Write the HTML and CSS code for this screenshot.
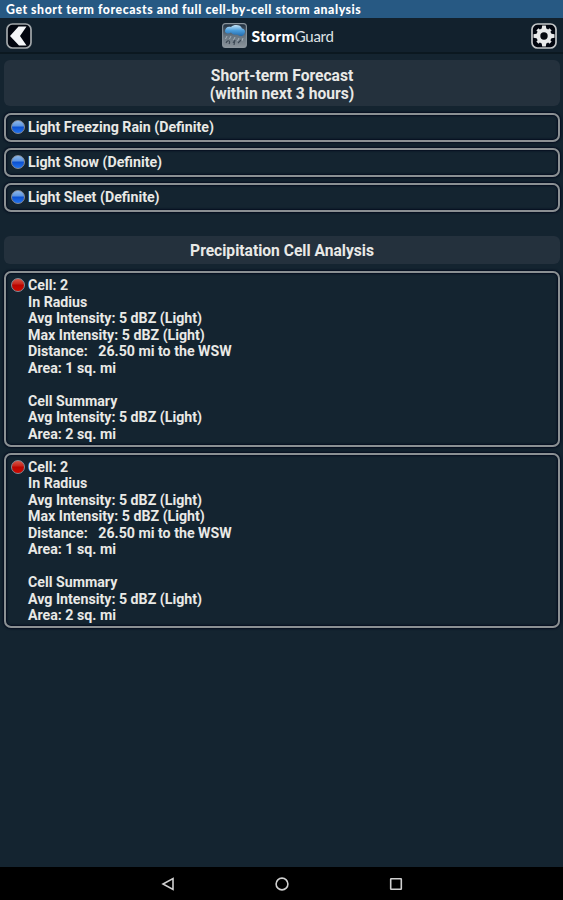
FILE: index.html
```html
<!DOCTYPE html>
<html lang="en">
<head>
    <meta charset="UTF-8">
    <meta name="viewport" content="width=device-width, initial-scale=1.0">
    <title>StormGuard</title>
    <link rel="stylesheet" href="styles.css">
</head>
<body>

    <div class="banner">Get short term forecasts and full cell-by-cell storm analysis</div>

    <header class="toolbar">
        <!-- Back -->
        <svg class="tool" viewBox="0 0 26 26">
            <rect x="1" y="1" width="24" height="24" rx="5.5" fill="#02060f" stroke="#a3a8ab" stroke-width="1.7"/>
            <path d="M12.5 3.5H20.5L14 13L20.5 22.5H13L4 13Z" fill="#f4f6f8"/>
        </svg>
        <div class="brand">
            <svg class="logo" viewBox="0 0 25 25">
                <defs>
                    <linearGradient id="sky" x1="0" y1="0" x2="0" y2="1">
                        <stop offset="0" stop-color="#1c2c3c"/>
                        <stop offset="0.5" stop-color="#65737f"/>
                        <stop offset="1" stop-color="#8b949b"/>
                    </linearGradient>
                    <linearGradient id="cloud" x1="0" y1="0" x2="0" y2="1">
                        <stop offset="0" stop-color="#c4e4f7"/>
                        <stop offset="0.5" stop-color="#4a9ddb"/>
                        <stop offset="1" stop-color="#246aab"/>
                    </linearGradient>
                </defs>
                <rect x="0.6" y="0.6" width="23.8" height="23.8" rx="3" fill="url(#sky)" stroke="#8a959d" stroke-width="1.1"/>
                <path d="M3 8.5C3 4.5 6 3 9 4C12 1 19 1.5 20 5.5C23 6 24 9 22 11.5C20 14 17 13 15 11.5C12 12.5 10 11 9 9.5C7 11 4 11 3 8.5Z" fill="url(#cloud)"/>
                <path d="M5 13L3.5 16M9 13L7.5 16M13 14L11.5 17M17 15L15.5 18M21 15L20 18" stroke="#a9b4bc" stroke-width="0.9" fill="none"/>
                <path d="M4 20C6 16 9 18 7 21M11 20L13 17L12 22M16 20L19 17" stroke="#3c4854" stroke-width="1.1" fill="none"/>
            </svg>
            <div class="name"><b>Storm</b><span>Guard</span></div>
        </div>
        <!-- Settings -->
        <svg class="tool" viewBox="0 0 26 26">
            <rect x="1" y="1" width="24" height="24" rx="5.5" fill="#02060f" stroke="#c4c7c9" stroke-width="1.7"/>
            <g fill="#e9eaea">
                <circle cx="13" cy="13" r="7.7"/>
                <path d="M11.2 2.5H14.8L15.5 7H10.5ZM11.2 23.5H14.8L15.5 19H10.5ZM2.5 11.2V14.8L7 15.5V10.5ZM23.5 11.2V14.8L19 15.5V10.5Z"/>
                <path d="M11.5 3.7H14.5V22.3H11.5Z" transform="rotate(45 13 13)"/>
                <path d="M11.5 3.7H14.5V22.3H11.5Z" transform="rotate(-45 13 13)"/>
            </g>
            <circle cx="13" cy="13" r="3.7" fill="#080b10"/>
        </svg>
    </header>

    <main class="content">
        <h2 class="heading heading-tall">Short-term Forecast<br>(within next 3 hours)</h2>

        <div class="forecast">
            <div class="box row"><i class="dot blue"></i><span>Light Freezing Rain (Definite)</span></div>
            <div class="box row"><i class="dot blue"></i><span>Light Snow (Definite)</span></div>
            <div class="box row"><i class="dot blue"></i><span>Light Sleet (Definite)</span></div>
        </div>

        <h2 class="heading">Precipitation Cell Analysis</h2>

        <div class="cells">
            <div class="box cell">
                <i class="dot red"></i>
                <div class="details">Cell: 2<br>In Radius<br>Avg Intensity: 5 dBZ (Light)<br>Max Intensity: 5 dBZ (Light)<br>Distance: &nbsp; 26.50 mi to the WSW<br>Area: 1 sq. mi<br><br>Cell Summary<br>Avg Intensity: 5 dBZ (Light)<br>Area: 2 sq. mi</div>
            </div>
            <div class="box cell">
                <i class="dot red"></i>
                <div class="details">Cell: 2<br>In Radius<br>Avg Intensity: 5 dBZ (Light)<br>Max Intensity: 5 dBZ (Light)<br>Distance: &nbsp; 26.50 mi to the WSW<br>Area: 1 sq. mi<br><br>Cell Summary<br>Avg Intensity: 5 dBZ (Light)<br>Area: 2 sq. mi</div>
            </div>
        </div>
    </main>

    <nav class="navbar">
        <svg viewBox="0 0 14 14"><path d="M12 1.5V12.5L2 7Z"/></svg>
        <svg viewBox="0 0 14 14"><circle cx="7" cy="7" r="5.9"/></svg>
        <svg viewBox="0 0 14 14"><rect x="1.7" y="1.7" width="10.6" height="10.6" rx="0.5"/></svg>
    </nav>

</body>
</html>
```
FILE: styles.css
```css
* {
    box-sizing: border-box;
}
body {
    margin: 0;
    height: 900px;
    display: flex;
    flex-direction: column;
    background-color: #142430;
    color: #e9e9e6;
    font-family: Roboto, sans-serif;
    overflow: hidden;
}
.banner {
    height: 18px;
    padding-left: 6px;
    background-color: #275983;
    color: #fff;
    font: 900 12.3px/19px Lato, sans-serif;
    letter-spacing: 0.55px;
    white-space: nowrap;
}
.toolbar {
    height: 36px;
    padding: 1px 6px 0;
    display: flex;
    justify-content: space-between;
    align-items: center;
    background-color: #12212d;
    border-bottom: 2px solid #0b1820;
}
.tool {
    width: 26px;
    height: 26px;
}
.brand {
    display: flex;
    align-items: center;
    gap: 4px;
    margin-right: 7px;
}
.logo {
    width: 25px;
    height: 25px;
}
.name {
    font: 400 15px/20px Lato, sans-serif;
    color: #dfe3e6;
    letter-spacing: -0.3px;
}
.name b {
    font-size: 15.5px;
    font-weight: 900;
    letter-spacing: 0.3px;
    color: #fff;
}
.content {
    flex: 1;
    padding: 6px 3px 0 4px;
}
.heading {
    margin: 0;
    height: 28px;
    border-radius: 6px;
    background-color: #24313d;
    font-size: 15.6px;
    font-weight: 700;
    line-height: 31px;
    text-align: center;
}
.heading-tall {
    height: 46px;
    padding-top: 7px;
    line-height: 18px;
}
.box {
    border: 2px solid #8b9093;
    border-radius: 7px;
    box-shadow: 0 0 2px 1px #050d1f, inset 0 0 2px 1px #050d1f;
    font-size: 14.2px;
    font-weight: 700;
}
.forecast {
    display: flex;
    flex-direction: column;
    gap: 6px;
    margin: 7px 0 24px;
}
.row {
    height: 29px;
    padding: 0 0 1px 5px;
    display: flex;
    align-items: center;
    gap: 3px;
}
.dot {
    flex: none;
    width: 14px;
    height: 14px;
    border: 1px solid #858b96;
    border-radius: 50%;
}
.blue {
    background: linear-gradient(#8cb8ec 0, #5b93e0 42%, #0b4fd0 50%, #2273ee 100%);
}
.red {
    background: linear-gradient(#d55648 0, #c82318 42%, #b80500 50%, #cd0900 100%);
}
.cells {
    display: flex;
    flex-direction: column;
    gap: 6px;
    margin-top: 7px;
}
.cell {
    height: 175.5px;
    padding: 4px 0 0 5px;
    display: flex;
    gap: 3px;
}
.cell .dot {
    margin-top: 1px;
}
.details {
    line-height: 16.55px;
}
.navbar {
    height: 33px;
    display: flex;
    justify-content: center;
    align-items: center;
    gap: 100px;
    background-color: #000;
}
.navbar svg {
    width: 14px;
    height: 14px;
    fill: none;
    stroke: #d0d0d0;
    stroke-width: 1.6;
}
```
